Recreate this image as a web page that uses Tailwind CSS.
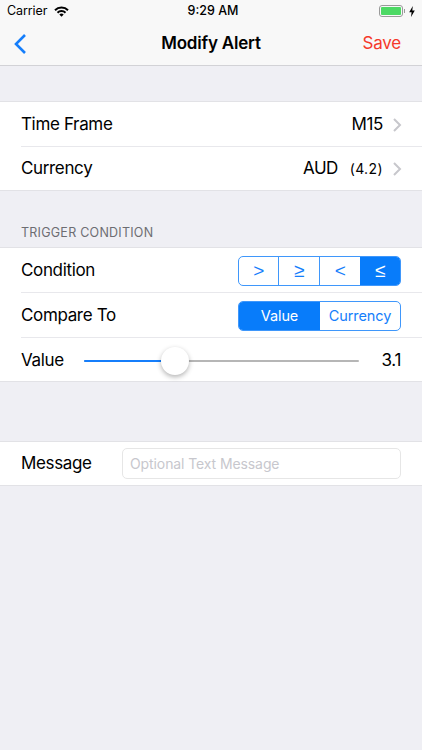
<!DOCTYPE html>
<html lang="en">
<head>
    <meta charset="UTF-8">
    <title>Modify Alert</title>
    <script src="https://cdn.jsdelivr.net/npm/@tailwindcss/browser@4"></script>
</head>
<body class="bg-[#efeff4] w-[422px] h-[750px] overflow-hidden font-['Inter','Liberation_Sans',sans-serif] text-black">
    <header class="bg-[#f8f8f8] border-b border-[#d2d2d6] h-[66px]">
        <div class="h-[22px] flex items-center px-[7px] relative text-[12.5px]">
            <span class="tracking-[-0.1px]">Carrier</span>
            <svg class="ml-[7px]" width="15" height="11" viewBox="0 0 15 11"><path d="M0.3 3.6 A10 10 0 0 1 14.7 3.6 L13.3 5 A8 8 0 0 0 1.7 5 Z M2.8 6.1 A6.5 6.5 0 0 1 12.2 6.1 L10.8 7.5 A4.5 4.5 0 0 0 4.2 7.5 Z M5.3 8.6 A3 3 0 0 1 9.7 8.6 L7.5 10.8 Z" fill="#000"/></svg>
            <span class="absolute left-[4px] right-0 text-center font-medium text-[12.5px]">9:29 AM</span>
            <div class="ml-auto flex items-center">
                <div class="w-[24px] h-[12px] rounded-[3px] border border-[#9a9a9a] p-[1px]">
                    <div class="w-full h-full bg-[#4cd964] rounded-[1px]"></div>
                </div>
                <div class="w-[1px] h-[4px] bg-[#9a9a9a] ml-[1px]"></div>
                <svg class="ml-[4px]" width="6" height="11" viewBox="0 0 6 11"><path d="M3.8 0 L0.2 6.2 H2.6 L2 11 L5.8 4.4 H3.3 Z" fill="#000"/></svg>
            </div>
        </div>
        <div class="h-[43px] flex items-center justify-between relative pl-[13px] pr-[21px]">
            <svg width="14" height="22" viewBox="0 0 14 22" fill="none"><path d="M12 2 L3 11 L12 20" stroke="#157efb" stroke-width="2.6"/></svg>
            <span class="absolute left-0 right-0 text-center text-[17px] font-semibold tracking-[-0.2px]">Modify Alert</span>
            <span class="text-[17px] text-[#f5392b] relative tracking-[-0.2px]">Save</span>
        </div>
    </header>

    <section class="mt-[35px] bg-white border-y border-[#e2e2e6] text-[17px] tracking-[-0.35px]">
        <div class="h-[44px] pt-[2px] flex items-center pl-[21px] pr-[20px]">
            <span>Time Frame</span>
            <span class="ml-auto">M15</span>
            <svg class="ml-[10px]" width="9" height="14" viewBox="0 0 9 14" fill="none"><path d="M1 1 L7 7 L1 13" stroke="#c7c7cc" stroke-width="2"/></svg>
        </div>
        <div class="ml-[21px] border-t border-[#e8e8ec]"></div>
        <div class="h-[43px] flex items-center pl-[21px] pr-[20px]">
            <span>Currency</span>
            <span class="ml-auto tracking-[-0.6px]">AUD</span>
            <span class="ml-[12px] text-[14px] tracking-[0.4px]">(4.2)</span>
            <svg class="ml-[10px]" width="9" height="14" viewBox="0 0 9 14" fill="none"><path d="M1 1 L7 7 L1 13" stroke="#c7c7cc" stroke-width="2"/></svg>
        </div>
    </section>

    <div class="h-[56px] flex items-end pl-[21px] pb-[4px] text-[12.5px] text-[#6d6d72] tracking-[0.25px]">TRIGGER CONDITION</div>

    <section class="bg-white border-y border-[#e2e2e6] text-[17px] tracking-[-0.35px]">
        <div class="h-[44px] pt-[2px] flex items-center pl-[21px] pr-[21px] justify-between">
            <span>Condition</span>
            <div class="flex w-[163px] h-[30px] border border-[#3f97fb] rounded-[5px] overflow-hidden text-[#157efb] text-[19px] font-['Liberation_Sans',sans-serif]">
                <div class="w-[40px] flex items-center justify-center border-r border-[#3f97fb]">&gt;</div>
                <div class="w-[41px] flex items-center justify-center border-r border-[#3f97fb]">≥</div>
                <div class="w-[40px] flex items-center justify-center">&lt;</div>
                <div class="flex-1 flex items-center justify-center bg-[#087cfa] text-white">≤</div>
            </div>
        </div>
        <div class="ml-[21px] border-t border-[#e8e8ec]"></div>
        <div class="h-[44px] pt-[2px] flex items-center pl-[21px] pr-[21px] justify-between">
            <span>Compare To</span>
            <div class="flex w-[163px] h-[30px] border border-[#3f97fb] rounded-[5px] overflow-hidden text-[14.5px] tracking-[-0.1px]">
                <div class="w-[81px] flex items-center justify-center bg-[#087cfa] text-white">Value</div>
                <div class="flex-1 flex items-center justify-center text-[#157efb]">Currency</div>
            </div>
        </div>
        <div class="ml-[21px] border-t border-[#e8e8ec]"></div>
        <div class="h-[43px] pt-[2px] flex items-center pl-[21px] pr-[21px]">
            <span class="w-[63px]">Value</span>
            <div class="relative w-[275px] h-[2px] bg-[#b6b6b6] rounded-full">
                <div class="h-full w-[91px] bg-[#157efb] rounded-full"></div>
                <div class="absolute left-[77px] top-[-13px] w-[28px] h-[28px] rounded-full bg-white shadow-[0_2px_5px_rgba(0,0,0,0.3)]"></div>
            </div>
            <span class="ml-auto">3.1</span>
        </div>
    </section>

    <section class="mt-[59px] bg-white border-y border-[#e2e2e6] text-[17px] tracking-[-0.35px] h-[45px] flex items-center pl-[21px] pr-[21px]">
        <span class="w-[101px]">Message</span>
        <div class="flex-1 h-[31px] border border-[#e6e6e6] rounded-[5px] flex items-center px-[7px] text-[14px] tracking-[-0.1px] text-[#c7c7cd]">Optional Text Message</div>
    </section>
</body>
</html>
